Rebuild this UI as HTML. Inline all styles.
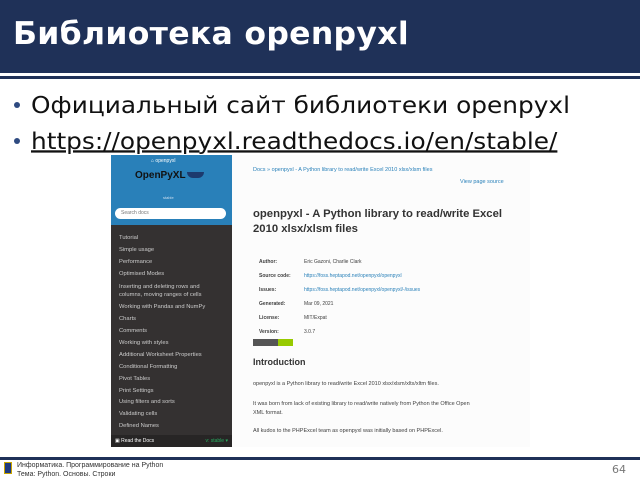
<!DOCTYPE html>
<html><head><meta charset="utf-8"><style>
*{margin:0;padding:0;box-sizing:border-box}
body{width:640px;height:480px;overflow:hidden;background:#fff;position:relative;font-family:"DejaVu Sans","Liberation Sans",sans-serif}
.hdr{position:absolute;left:0;top:0;width:640px;height:73px;background:#1f3158}
.hdr h1{position:absolute;left:13px;top:16px;color:#fff;font-size:31.5px;font-weight:bold;letter-spacing:0.3px}
.l2{position:absolute;left:0;top:76px;width:640px;height:3px;background:#1f3158}
.b{position:absolute;left:14px;font-size:20px;color:#111;white-space:nowrap}
.b::before{content:"";position:absolute;left:0;top:13px;width:6px;height:6px;border-radius:3px;background:#2e4a80}
.b span{margin-left:17px;display:inline-block;transform:scaleX(1.24);transform-origin:0 0;line-height:28px;font-size:20px}
.shot{position:absolute;left:111px;top:155px;width:419px;height:292px;background:#fcfcfc;font-family:"Liberation Sans",sans-serif}
.sb{position:absolute;left:0;top:0;width:121px;height:292px;background:#343131}
.sbt{position:absolute;left:0;top:0;width:121px;height:70px;background:#2980b9}
.srch{position:absolute;left:4px;top:53px;width:111px;height:11px;border-radius:6px;background:#fff;font-size:5px;color:#777;padding:2px 6px}
.nav{position:absolute;left:8px;font-size:5.8px;color:#ccc}
.c{position:absolute;font-size:5.5px;color:#404040}
.lnk{color:#2980b9}
.ft{position:absolute;left:0;top:457px;width:640px;height:3px;background:#1f3158}
</style></head><body>
<div class="hdr"><h1>Библиотека openpyxl</h1></div>
<div class="l2"></div>
<div class="b" style="top:89px;height:28px"><span style="transform:scale(1.24,1.15)">Официальный сайт библиотеки openpyxl</span></div>
<div class="b" style="top:125px;height:28px"><span style="transform:scale(1.24,1.15);text-decoration:underline">https://openpyxl.readthedocs.io/en/stable/</span></div>
<div class="shot">
 <div class="sb">
  <div class="sbt">
   <div style="position:absolute;left:40px;top:3px;font-size:5px;color:#fff">⌂ openpyxl</div>
   <div style="position:absolute;left:24px;top:15px;font-size:10px;font-weight:bold;color:#111">OpenPyXL<span style="display:inline-block;width:17px;height:6px;background:#1c3a6e;border-radius:0 0 8px 8px;margin-left:1px"></span></div>
   <div style="position:absolute;left:52px;top:40px;font-size:4px;color:#cde">stable</div>
   <div class="srch">Search docs</div>
  </div>
  <div class="nav" style="top:80px">Tutorial</div>
  <div class="nav" style="top:92px">Simple usage</div>
  <div class="nav" style="top:104px">Performance</div>
  <div class="nav" style="top:116px">Optimised Modes</div>
  <div class="nav" style="top:128px;line-height:8px">Inserting and deleting rows and<br>columns, moving ranges of cells</div>
  <div class="nav" style="top:149px">Working with Pandas and NumPy</div>
  <div class="nav" style="top:161px">Charts</div>
  <div class="nav" style="top:173px">Comments</div>
  <div class="nav" style="top:185px">Working with styles</div>
  <div class="nav" style="top:197px">Additional Worksheet Properties</div>
  <div class="nav" style="top:209px">Conditional Formatting</div>
  <div class="nav" style="top:221px">Pivot Tables</div>
  <div class="nav" style="top:233px">Print Settings</div>
  <div class="nav" style="top:244px">Using filters and sorts</div>
  <div class="nav" style="top:256px">Validating cells</div>
  <div class="nav" style="top:268px">Defined Names</div>
  <div style="position:absolute;left:0;top:280px;width:121px;height:12px;background:#272525;font-size:5px;color:#fff;padding:3px 4px">▣ Read the Docs<span style="float:right;color:#27ae60">v: stable ▾</span></div>
 </div>
 <div class="c lnk" style="left:142px;top:12px;font-size:5.5px">Docs » openpyxl - A Python library to read/write Excel 2010 xlsx/xlsm files</div>
 <div class="c lnk" style="left:349px;top:24px;font-size:5.5px">View page source</div>
 <div class="c" style="left:142px;top:52px;font-size:11.3px;font-weight:bold;line-height:15px;color:#333">openpyxl - A Python library to read/write Excel<br>2010 xlsx/xlsm files</div>
 <div class="c" style="left:148px;top:100px;font-size:5px;line-height:14px;font-weight:bold">Author:<br>Source code:<br>Issues:<br>Generated:<br>License:<br>Version:</div>
 <div class="c" style="left:193px;top:100px;font-size:5px;line-height:14px">Eric Gazoni, Charlie Clark<br><span class="lnk">https://foss.heptapod.net/openpyxl/openpyxl</span><br><span class="lnk">https://foss.heptapod.net/openpyxl/openpyxl/-/issues</span><br>Mar 09, 2021<br>MIT/Expat<br>3.0.7</div>
 <div style="position:absolute;left:142px;top:184px;width:26px;height:7px;background:#555"></div>
 <div style="position:absolute;left:167px;top:184px;width:15px;height:7px;background:#97ca00"></div>
 <div class="c" style="left:142px;top:202px;font-size:9px;font-weight:bold;color:#333">Introduction</div>
 <div class="c" style="left:142px;top:226px;font-size:5.5px">openpyxl is a Python library to read/write Excel 2010 xlsx/xlsm/xltx/xltm files.</div>
 <div class="c" style="left:142px;top:245px;font-size:5.5px;line-height:9px">It was born from lack of existing library to read/write natively from Python the Office Open<br>XML format.</div>
 <div class="c" style="left:142px;top:273px;font-size:5.5px">All kudos to the PHPExcel team as openpyxl was initially based on PHPExcel.</div>
</div>
<div class="ft"></div>
<div style="position:absolute;left:4px;top:462px;width:8px;height:12px;background:#1f3a80;border:1px solid #c9a500"></div>
<div style="position:absolute;left:17px;top:461px;font-size:7px;line-height:9px;color:#333;font-family:'Liberation Sans',sans-serif">Информатика. Программирование на Python<br>Тема: Python. Основы. Строки</div>
<div style="position:absolute;right:14px;top:463px;font-size:11px;color:#777">64</div>
</body></html>
